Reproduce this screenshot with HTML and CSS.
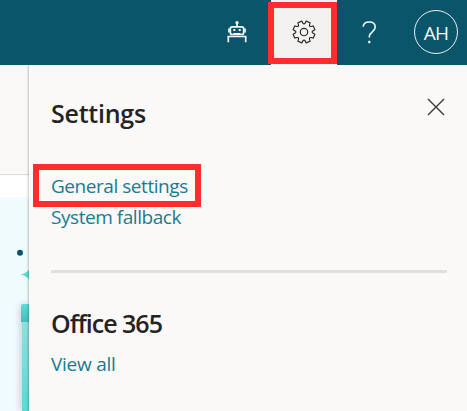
FILE: index.html
```html
<!DOCTYPE html>
<html lang="en">
<head>
<meta charset="utf-8">
<title>Settings</title>
<link rel="stylesheet" href="styles.css">
</head>
<body>
<header class="topbar">
  <button class="tool robot" aria-label="Assistant">
    <svg width="20" height="22" viewBox="0 0 20 22" fill="none" stroke="currentColor" stroke-width="1.7">
      <path d="M10 2v4M1.3 21.3v-5.8h17.4v5.8M6.5 12.9h7"/>
      <rect x="3.3" y="5.9" width="13.4" height="7.6" rx="2"/>
      <path d="M1.9 7.5v4M18.1 7.5v4" stroke-width="1.6"/>
      <circle cx="10" cy="1.7" r="1.6" fill="currentColor" stroke="none"/>
      <path d="M6.3 9h2M11.7 9h2" stroke-width="2"/>
    </svg>
  </button>
  <button class="tool gear" aria-label="Settings">
    <svg width="24" height="24" viewBox="-12 -12 24 24" fill="none" stroke="currentColor" stroke-width="1.15" stroke-linejoin="round">
      <path id="gear-outline"/>
      <circle r="3.7"/>
    </svg>
  </button>
  <button class="tool help" aria-label="Help">
    <svg width="15" height="23" viewBox="0 0 15 23" fill="none" stroke="currentColor" stroke-width="1.6">
      <path d="M1.2 5.8C1.3 2.7 3.9 1 7.2 1c3.7 0 6 2 6 5.1 0 4.8-5.9 5.1-5.9 9.2v1.3"/>
      <path d="M7.3 19.8v2.4" stroke-width="2.2"/>
    </svg>
  </button>
  <div class="avatar">AH</div>
</header>
<main class="workspace">
  <aside class="page">
    <div class="page-head"></div>
    <div class="page-gap"></div>
    <div class="page-art">
      <svg width="29" height="214" viewBox="0 0 29 214">
        <defs>
          <linearGradient id="cap" x2="0" y2="1"><stop stop-color="#69d5d5"/><stop offset="1" stop-color="#48bdbd"/></linearGradient>
          <linearGradient id="stem" x2="0" y2="1"><stop stop-color="#91dfdc"/><stop offset="1" stop-color="#62d7d4"/></linearGradient>
          <filter id="soft" x="-3" width="7"><feGaussianBlur stdDeviation="3"/></filter>
        </defs>
        <path d="M20 107h9v107h-9z" fill="#658c9c" opacity=".35" filter="url(#soft)"/>
        <circle cx="20" cy="55.8" r="3" fill="#0b556a"/>
        <path d="M20 77.5q6-.8 9-5v10q-3-4.2-9-5" fill="#62d8d3"/>
        <path d="M22 121h7v93h-7z" fill="url(#stem)"/>
        <path d="M21 109q0-2 2-2h6v18h-8z" fill="url(#cap)"/>
      </svg>
    </div>
  </aside>
  <section class="panel">
    <div class="panel-head">
      <h1>Settings</h1>
      <button class="close" aria-label="Close">
        <svg width="18" height="18" viewBox="0 0 18 18" stroke="currentColor" stroke-width="1.4"><path d="M1 1l16 16M17 1L1 17"/></svg>
      </button>
    </div>
    <a class="link general"><span>General settings</span></a>
    <a class="link fallback">System fallback</a>
    <hr>
    <h2>Office 365</h2>
    <a class="link view">View all</a>
  </section>
</main>
<script src="gear.js"></script>
</body>
</html>
```
FILE: styles.css
```css
* { box-sizing: border-box; }
body {
  margin: 0;
  width: 467px;
  height: 411px;
  overflow: hidden;
  background: #faf9f8;
  font-family: "Open Sans", "Noto Sans", sans-serif;
}
button {
  padding: 0;
  border: 0;
  background: none;
  color: inherit;
}
svg { display: block; }
.topbar {
  height: 65px;
  display: flex;
  align-items: center;
  background: #0b556a;
  color: #f3f8f9;
}
.tool {
  display: flex;
  align-items: center;
  justify-content: center;
  height: 65px;
}
.robot { width: 66px; margin-left: 205px; padding: 0 2px 1px 0; }
.gear {
  position: relative;
  width: 66px;
  padding-bottom: 1px;
  background: #f3f2f1;
  color: #292827;
}
.gear::after {
  content: "";
  position: absolute;
  inset: 2px 0 1px -3px;
  border: 6px solid #ff2d2e;
}
.help { width: 65px; padding-bottom: 1px; }
.avatar {
  width: 44px;
  height: 44px;
  margin: 0 0 1px 12px;
  border: 1px solid #e7f0f2;
  border-radius: 50%;
  font-size: 19px;
  line-height: 44px;
  text-align: center;
  letter-spacing: -0.8px;
}
.workspace { display: flex; height: 346px; }
.page { width: 29px; flex: none; }
.page-head {
  height: 109px;
  background: #faf9f8;
  box-shadow: 0 1px 1px #dedede;
  position: relative;
}
.page-gap { height: 23px; background: #fff; }
.page-art { height: 214px; background: #f0fbfe; }
.panel {
  position: relative;
  width: 438px;
  padding: 0 20px 0 22px;
  background: #faf9f8;
  box-shadow: -1px 0 2px rgba(0, 0, 0, .22);
  clip-path: inset(0 0 0 -6px);
}
.panel-head {
  display: flex;
  justify-content: space-between;
  height: 99px;
  padding-top: 31px;
}
h1, h2 {
  margin: 0;
  color: #242322;
  font-size: 25px;
  line-height: 34px;
  font-weight: 600;
}
h1 { letter-spacing: -0.25px; }
h2 { letter-spacing: -1px; }
.close { width: 18px; height: 18px; margin: 2px 2px 0 0; color: #3b3a39; }
.link {
  display: block;
  color: #177b91;
  font-size: 19px;
  line-height: 26px;
}
.general {
  width: 168px;
  height: 43px;
  margin-left: -18px;
  padding: 3px 0 0 12px;
  border: 6px solid #ff2d2e;
  white-space: nowrap;
  letter-spacing: -0.45px;
}
.fallback { margin-top: -3px; letter-spacing: -0.45px; }
hr {
  height: 3px;
  margin: 40px 0 33px;
  border: 0;
  background: #e1dfdd;
}
.view { margin-top: 11px; letter-spacing: -0.25px; }
```
FILE: gear.js
```js
// Eight teeth, with each pair separated by a rounded valley.
const point = (radius, degrees) => {
  const angle = degrees * Math.PI / 180;
  return `${(radius * Math.cos(angle)).toFixed(2)} ${(radius * Math.sin(angle)).toFixed(2)}`;
};
let outline = "";
for (let tooth = 0; tooth < 8; tooth++) {
  const center = tooth * 45 + 22.5;
  outline += `${tooth ? "L" : "M"}${point(9.2, center - 14.5)}L${point(11.1, center - 11)}`;
  outline += `L${point(11.1, center + 11)}L${point(9.2, center + 14.5)}`;
  outline += `Q${point(7.2, center + 22.5)} ${point(9.2, center + 30.5)}`;
}
document.getElementById("gear-outline").setAttribute("d", outline + "Z");
```
